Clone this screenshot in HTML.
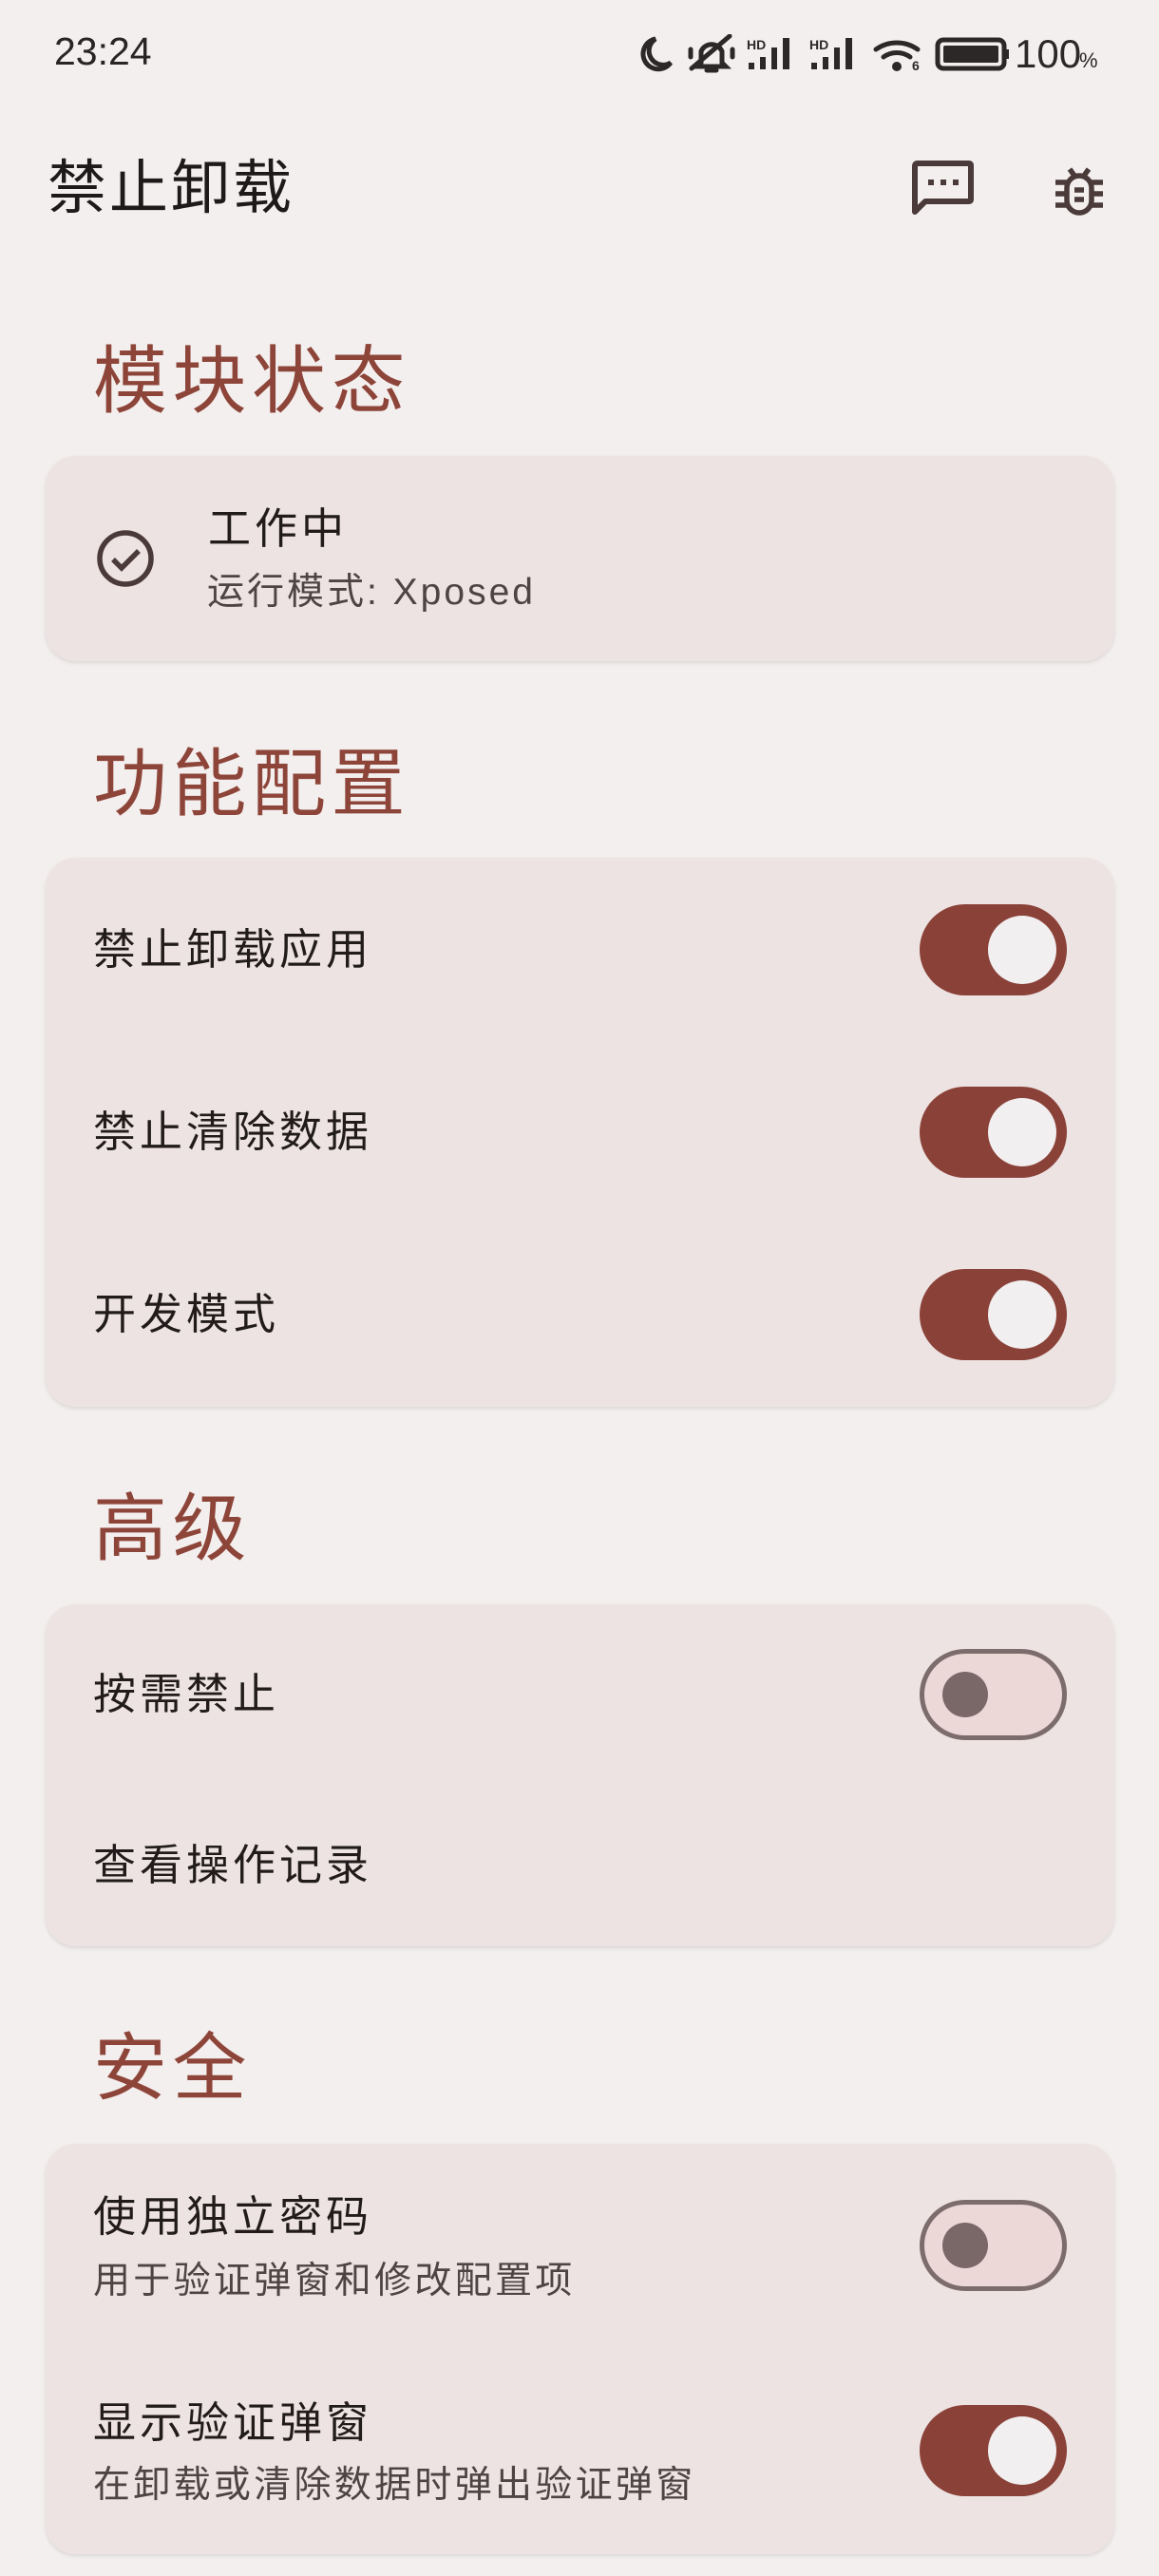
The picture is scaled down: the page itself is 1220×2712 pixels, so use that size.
<!DOCTYPE html>
<html><head><meta charset="utf-8">
<style>
*{margin:0;padding:0;box-sizing:border-box}
html,body{width:1220px;height:2712px;overflow:hidden}
body{background:#f3efee;font-family:"Liberation Sans","Noto Sans CJK SC",sans-serif;color:#1f1a1a;position:relative}
.abs{position:absolute}
.h{position:absolute;left:98px;font-size:78px;color:#8e4539;line-height:1;letter-spacing:5.5px}
.card{position:absolute;left:48px;width:1125px;background:#ede3e2;border-radius:32px;box-shadow:0 2px 4px rgba(0,0,0,0.10)}
.t{position:absolute;left:98px;font-size:45px;line-height:1;letter-spacing:4px;color:#211b1b}
.s{position:absolute;left:98px;font-size:39px;line-height:1;letter-spacing:3.3px;color:#4f4444}
.on{position:absolute;left:968px;width:155px;height:96px;border-radius:48px;background:#8a4138}
.on::after{content:"";position:absolute;left:72px;top:12px;width:72px;height:72px;border-radius:50%;background:#f2eff0}
.off{position:absolute;left:968px;width:155px;height:96px;border-radius:48px;background:#ecd9d7;border:5px solid #7d6c6c}
.off::after{content:"";position:absolute;left:19px;top:19px;width:48px;height:48px;border-radius:50%;background:#7a6868}
</style></head><body>

<div class="abs" style="left:57px;top:34px;font-size:41px;color:#2a2525;line-height:1;font-weight:500">23:24</div>
<svg class="abs" style="left:668px;top:36px" width="500" height="42" viewBox="668 36 500 42">
 <g fill="none" stroke="#2d2828" stroke-width="5" stroke-linecap="round">
  <path d="M690 41 A16 16 0 1 0 706 66 A14 14 0 0 1 690 41Z"/>
  <path d="M738 66 L738 54 A12 12 0 0 1 760 54 L760 66 L764 70 L734 70Z M744 74 L754 74"/>
  <path d="M728 72 L768 38"/><path d="M727 52 L727 60 M771 52 L771 60"/>
  <path d="M922 52 A38 38 0 0 1 966 52 M930 60 A24 24 0 0 1 958 60"/>
  <rect x="987" y="42" width="70" height="30" rx="6"/>
 </g>
 <g fill="#2d2828">
  <text x="786" y="52" font-size="14" font-weight="bold" font-family="Liberation Sans">HD</text>
  <rect x="788" y="66" width="6" height="7"/><rect x="800" y="60" width="6" height="13"/><rect x="812" y="50" width="6" height="23"/><rect x="824" y="40" width="7" height="33"/>
  <text x="852" y="52" font-size="14" font-weight="bold" font-family="Liberation Sans">HD</text>
  <rect x="854" y="66" width="6" height="7"/><rect x="866" y="60" width="6" height="13"/><rect x="878" y="50" width="6" height="23"/><rect x="890" y="40" width="7" height="33"/>
  <circle cx="944" cy="70" r="5"/>
  <text x="960" y="74" font-size="14" font-weight="bold" font-family="Liberation Sans">6</text>
  <rect x="993" y="48" width="58" height="18" rx="2"/><rect x="1058" y="52" width="4" height="10"/>
  <text x="1068" y="71" font-size="42" font-family="Liberation Sans">100</text>
  <text x="1136" y="71" font-size="22" font-family="Liberation Sans">%</text>
 </g>
</svg>

<div class="abs" style="left:50px;top:168px;font-size:62px;line-height:1;color:#1f1a1a;letter-spacing:3px">禁止卸载</div>
<svg class="abs" style="left:960px;top:168px" width="66" height="66" viewBox="0 0 66 66">
 <path d="M6 4 H60 Q62 4 62 6 V42 Q62 44 60 44 H14 L3 55 V7 Q3 4 6 4Z" fill="none" stroke="#4a3a3a" stroke-width="6" stroke-linejoin="round"/>
 <rect x="17" y="21" width="6" height="6" fill="#4a3a3a"/><rect x="30" y="21" width="6" height="6" fill="#4a3a3a"/><rect x="43" y="21" width="6" height="6" fill="#4a3a3a"/>
</svg>
<svg class="abs" style="left:1108px;top:170px" width="56" height="60" viewBox="0 0 56 60">
 <g fill="none" stroke="#4a3a3a" stroke-width="5.5">
  <rect x="15" y="15" width="26" height="39" rx="13"/>
  <path d="M18 8 L23 15 M38 8 L33 15 M3 22 H15 M41 22 H53 M3 34 H15 M41 34 H53 M3 46 H15 M41 46 H53 M23 30 H33 M23 40 H33"/>
 </g>
</svg>

<div class="h" style="top:362px">模块状态</div>
<div class="card" style="top:480px;height:216px"></div>
<svg class="abs" style="left:100px;top:556px" width="64" height="64" viewBox="0 0 64 64">
 <circle cx="32" cy="32" r="27" fill="none" stroke="#4a3a3a" stroke-width="5.5"/>
 <path d="M19 33 L28 42 L46 24" fill="none" stroke="#4a3a3a" stroke-width="5.5"/>
</svg>
<div class="t" style="left:219px;top:534px">工作中</div>
<div class="s" style="left:218px;top:604px;letter-spacing:3px">运行模式: Xposed</div>

<div class="h" style="top:786px">功能配置</div>
<div class="card" style="top:903px;height:578px"></div>
<div class="t" style="top:977px">禁止卸载应用</div><div class="on" style="top:952px"></div>
<div class="t" style="top:1169px">禁止清除数据</div><div class="on" style="top:1144px"></div>
<div class="t" style="top:1361px">开发模式</div><div class="on" style="top:1336px"></div>

<div class="h" style="top:1570px">高级</div>
<div class="card" style="top:1689px;height:360px"></div>
<div class="t" style="top:1761px">按需禁止</div><div class="off" style="top:1736px"></div>
<div class="t" style="top:1941px">查看操作记录</div>

<div class="h" style="top:2138px">安全</div>
<div class="card" style="top:2257px;height:432px"></div>
<div class="t" style="top:2311px">使用独立密码</div>
<div class="s" style="top:2382px">用于验证弹窗和修改配置项</div>
<div class="off" style="top:2316px"></div>
<div class="t" style="top:2528px">显示验证弹窗</div>
<div class="s" style="top:2597px">在卸载或清除数据时弹出验证弹窗</div>
<div class="on" style="top:2532px"></div>

</body></html>
